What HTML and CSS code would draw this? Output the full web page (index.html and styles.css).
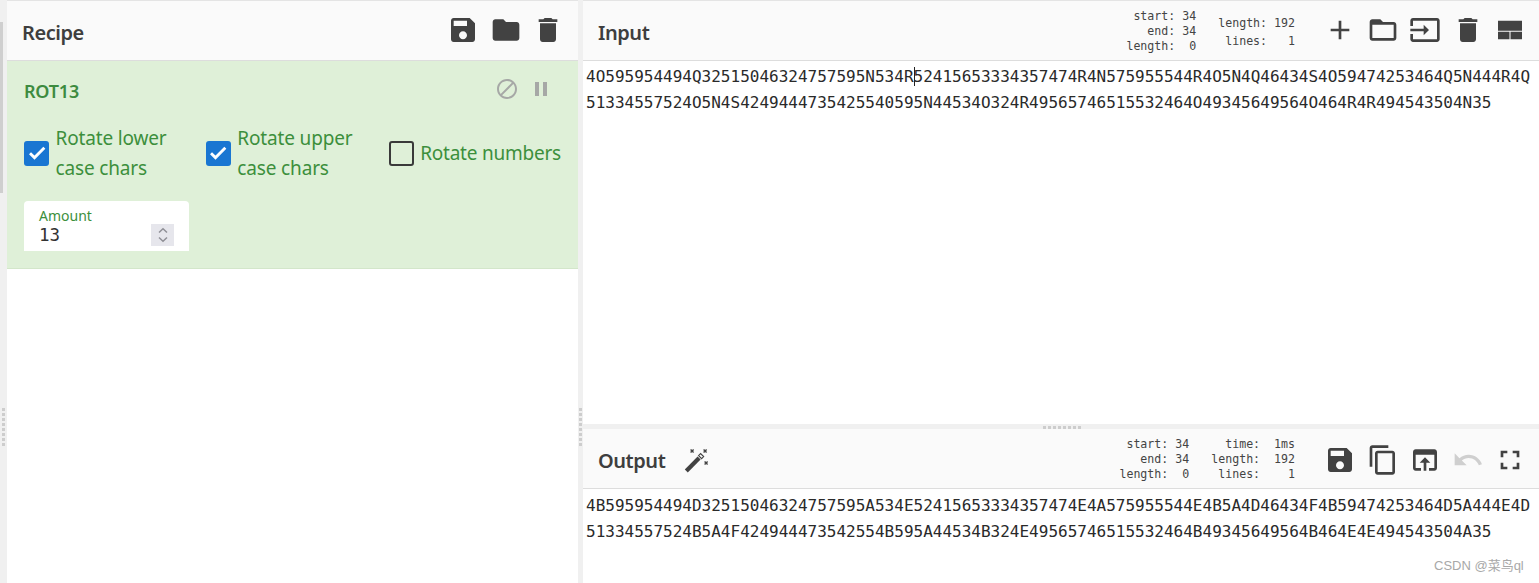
FILE: index.html
```html
<!DOCTYPE html>
<html lang="en">
<head>
<meta charset="utf-8">
<title>CyberChef ROT13</title>
<link rel="stylesheet" href="styles.css">
</head>
<body>
<div class="app">
  <div class="gutter gutter-left"><span class="scrollthumb"></span><span class="grip"></span></div>
  <section class="recipe">
    <header class="bar">
      <h2 class="title">Recipe</h2>
      <div class="spacer"></div>
      <div class="icons">
        <svg class="icon" viewBox="0 0 24 24"><path d="M17 3H5c-1.11 0-2 .9-2 2v14c0 1.1.89 2 2 2h14c1.1 0 2-.9 2-2V7l-4-4zm-5 16c-1.66 0-3-1.34-3-3s1.34-3 3-3 3 1.34 3 3-1.34 3-3 3zm3-10H5V5h10v4z"/></svg>
        <svg class="icon" viewBox="0 0 24 24"><path d="M10 4H4c-1.1 0-1.99.9-1.99 2L2 18c0 1.1.9 2 2 2h16c1.1 0 2-.9 2-2V8c0-1.1-.9-2-2-2h-8l-2-2z"/></svg>
        <svg class="icon" viewBox="0 0 24 24"><path d="M6 19c0 1.1.9 2 2 2h8c1.1 0 2-.9 2-2V7H6v12zM19 4h-3.5l-1-1h-5l-1 1H5v2h14V4z"/></svg>
      </div>
    </header>
    <div class="op">
      <div class="op-head">
        <h3 class="op-title">ROT13</h3>
        <div class="op-icons">
          <svg class="op-icon" viewBox="0 0 24 24"><path d="M12 2C6.48 2 2 6.48 2 12s4.48 10 10 10 10-4.48 10-10S17.52 2 12 2zM4 12c0-4.42 3.58-8 8-8 1.85 0 3.55.63 4.9 1.69L5.69 16.9C4.63 15.55 4 13.85 4 12zm8 8c-1.85 0-3.55-.63-4.9-1.69L18.31 7.1C19.37 8.45 20 10.15 20 12c0 4.42-3.58 8-8 8z"/></svg>
          <svg class="op-icon" viewBox="0 0 24 24"><path d="M6 19h4V5H6v14zm8-14v14h4V5h-4z"/></svg>
        </div>
      </div>
      <div class="checks">
        <label class="check check-a"><span class="box on"><svg viewBox="0 0 24 24"><path d="M9 16.17L4.83 12l-1.41 1.41L9 19 21 7l-1.41-1.41z"/></svg></span><span class="check-text">Rotate lower case chars</span></label>
        <label class="check check-b"><span class="box on"><svg viewBox="0 0 24 24"><path d="M9 16.17L4.83 12l-1.41 1.41L9 19 21 7l-1.41-1.41z"/></svg></span><span class="check-text">Rotate upper case chars</span></label>
        <label class="check check-c"><span class="box"></span><span class="check-text">Rotate numbers</span></label>
      </div>
      <div class="amount">
        <div class="amount-label">Amount</div>
        <div class="amount-row">
          <span class="amount-value">13</span>
          <span class="spinner">
            <svg viewBox="0 0 12 7"><path d="M2 5.5 6 1.8l4 3.7"/></svg>
            <svg viewBox="0 0 12 7"><path d="M2 1.5 6 5.2l4-3.7"/></svg>
          </span>
        </div>
      </div>
    </div>
  </section>
  <div class="gutter gutter-mid"><span class="grip"></span></div>
  <main class="io">
    <section class="input">
      <header class="bar">
        <h2 class="title">Input</h2>
        <div class="spacer"></div>
        <div class="stats">
          <pre class="stat stat-tight">start: 34
end: 34
length:  0</pre>
          <pre class="stat stat-loose">length: 192
lines:   1</pre>
        </div>
        <div class="icons">
          <svg class="icon" viewBox="0 0 24 24"><path d="M19 13h-6v6h-2v-6H5v-2h6V5h2v6h6v2z"/></svg>
          <svg class="icon" viewBox="0 0 24 24"><path d="M20 6h-8l-2-2H4c-1.1 0-1.99.9-1.99 2L2 18c0 1.1.9 2 2 2h16c1.1 0 2-.9 2-2V8c0-1.1-.9-2-2-2zm0 12H4V8h16v10z"/></svg>
          <svg class="icon" viewBox="0 0 24 24"><path d="M21 3.01H3c-1.1 0-2 .9-2 2V9h2V4.99h18v14.03H3V15H1v4.01c0 1.1.9 1.98 2 1.98h18c1.1 0 2-.88 2-1.98v-14c0-1.11-.9-2-2-2zM11 16l4-4-4-4v3H1v2h10v3z"/></svg>
          <svg class="icon" viewBox="0 0 24 24"><path d="M6 19c0 1.1.9 2 2 2h8c1.1 0 2-.9 2-2V7H6v12zM19 4h-3.5l-1-1h-5l-1 1H5v2h14V4z"/></svg>
          <svg class="icon" viewBox="0 0 24 24"><path d="M3 5h18v7.5H3zM3 13.25h8.6V19H3zM12.4 13.25H21V19h-8.6z"/></svg>
        </div>
      </header>
      <div class="text text-input">
        <div class="line">4O595954494Q32515046324757595N534R<span class="caret"></span>52415653334357474R4N575955544R4O5N4Q46434S4O59474253464Q5N444R4Q</div>
        <div class="line">51334557524O5N4S4249444735425540595N44534O324R49565746515532464O49345649564O464R4R494543504N35</div>
      </div>
    </section>
    <div class="gutter-h"><span class="grip-h"></span></div>
    <section class="output">
      <header class="bar">
        <h2 class="title">Output</h2>
        <svg class="wand" viewBox="0 0 25 25"><path d="M0.8 21.6 13.6 8.6l3 3L3.8 24.6z"/><path class="wand-tip" d="M14.6 7.6l2-2 3 3-2 2z"/><path class="wand-x" d="M6.6 1.6l3 3M9.6 1.6l-3 3M19.6 1.6l3 3M22.6 1.6l-3 3M20.6 13.6l3 3M23.6 13.6l-3 3"/></svg>
        <div class="spacer"></div>
        <div class="stats">
          <pre class="stat stat-tight">start: 34
end: 34
length:  0</pre>
          <pre class="stat stat-tight">time:  1ms
length:  192
lines:    1</pre>
        </div>
        <div class="icons">
          <svg class="icon" viewBox="0 0 24 24"><path d="M17 3H5c-1.11 0-2 .9-2 2v14c0 1.1.89 2 2 2h14c1.1 0 2-.9 2-2V7l-4-4zm-5 16c-1.66 0-3-1.34-3-3s1.34-3 3-3 3 1.34 3 3-1.34 3-3 3zm3-10H5V5h10v4z"/></svg>
          <svg class="icon" viewBox="0 0 24 24"><path d="M16 1H4c-1.1 0-2 .9-2 2v14h2V3h12V1zm3 4H8c-1.1 0-2 .9-2 2v14c0 1.1.9 2 2 2h11c1.1 0 2-.9 2-2V7c0-1.1-.9-2-2-2zm0 16H8V7h11v14z"/></svg>
          <svg class="icon" viewBox="0 0 24 24"><path d="M19 4H5c-1.11 0-2 .9-2 2v12c0 1.1.89 2 2 2h4v-2H5V8h14v10h-4v2h4c1.1 0 2-.9 2-2V6c0-1.1-.89-2-2-2zm-7 6l-4 4h3v6h2v-6h3l-4-4z"/></svg>
          <svg class="icon icon-off" viewBox="0 0 24 24"><path d="M12.5 8c-2.65 0-5.05.99-6.9 2.6L2 7v9h9l-3.62-3.62c1.39-1.16 3.16-1.88 5.12-1.88 3.54 0 6.55 2.31 7.6 5.5l2.37-.78C21.08 11.03 17.15 8 12.5 8z"/></svg>
          <svg class="icon" viewBox="0 0 24 24"><path d="M7 14H5v5h5v-2H7v-3zm-2-4h2V7h3V5H5v5zm12 7h-3v2h5v-5h-2v3zM14 5v2h3v3h2V5h-5z"/></svg>
        </div>
      </header>
      <div class="text text-output">
        <div class="line">4B595954494D32515046324757595A534E52415653334357474E4A575955544E4B5A4D46434F4B59474253464D5A444E4D</div>
        <div class="line">51334557524B5A4F424944473542554B595A44534B324E49565746515532464B49345649564B464E4E494543504A35</div>
      </div>
    </section>
  </main>
</div>
<div class="watermark">CSDN @菜鸟ql</div>
</body>
</html>
```
FILE: styles.css
```css
* { box-sizing: border-box; }
html, body { margin: 0; height: 100%; overflow: hidden; background: #fff; }
body { font-family: "Noto Sans", "Open Sans", sans-serif; color: #424242; }

.app { display: flex; height: 583px; width: 1539px; }

.gutter { position: relative; flex: none; background: #f0f0f0; }
.gutter-left { width: 7px; }
.gutter-mid { width: 5px; }
.scrollthumb { position: absolute; left: 0; top: 22px; width: 3px; height: 171px; background: #cfcfcf; }
.grip {
  position: absolute; left: 2px; top: 408px; width: 3px; height: 38px;
  background: repeating-linear-gradient(to bottom, #cdcdcd 0 3px, transparent 3px 5px);
}
.gutter-mid .grip { left: 1px; }

.recipe { width: 571px; flex: none; display: flex; flex-direction: column; }
.io { flex: 1; display: flex; flex-direction: column; min-width: 0; }
.input { height: 424px; flex: none; display: flex; flex-direction: column; }
.output { flex: 1; display: flex; flex-direction: column; min-height: 0; }

.bar {
  height: 61px; flex: none; display: flex; align-items: center;
  background: #fafafa; border-top: 1px solid #e4e4e4; border-bottom: 1px solid #dddddd;
  padding: 4px 13px 0 15px;
}
.output .bar { height: 60px; border-top: 0; }
.title { margin: 0; font-size: 20px; font-weight: 600; color: #3e3e3e; line-height: 1; letter-spacing: -0.45px; }
.spacer { flex: 1; }
.icons { display: flex; gap: 10.5px; margin-top: -6px; }
.output .icons { margin-top: -2px; }
.recipe .icons { margin-right: 1px; }
.icon { width: 32px; height: 32px; fill: #424242; display: block; }
.icon-off { fill: #cfcfcf; }

.wand { width: 25px; height: 25px; margin-left: 19px; fill: #424242; }
.wand-tip { fill: #fafafa; stroke: #424242; stroke-width: 1.2; }
.wand-x { fill: none; stroke: #424242; stroke-width: 1.4; }

.stats { display: flex; gap: 22px; margin-right: 29px; margin-top: -2px; }
.stat {
  margin: 0; font-family: "DejaVu Sans Mono", monospace; font-size: 11.6px; color: #444;
  text-align: right; white-space: pre;
}
.stat-tight { line-height: 15px; }
.stat-loose { line-height: 18px; margin-top: 5px; }

.op {
  height: 208px; background: #dff0d8; border-bottom: 1px solid #d3e6ca;
  padding: 0 17px; color: #3c8a3c; flex: none;
}
.op-head { display: flex; align-items: center; justify-content: space-between; height: 60px; }
.op-title { margin: 0; font-size: 18px; font-weight: 600; color: #3d8b40; line-height: 1; letter-spacing: -0.2px; }
.op-icons { display: flex; gap: 10px; margin-top: -5px; margin-right: 8px; }
.op-icon { width: 24px; height: 24px; fill: #a6a8a6; display: block; }

.checks { display: flex; align-items: center; height: 60px; margin-top: 2px; }
.check { display: flex; align-items: center; }
.check-a { width: 182.5px; }
.check-b { width: 183.5px; }
.check-text { font-size: 19px; line-height: 30px; color: #3c8f3c; letter-spacing: -0.15px; }
.check-a .check-text, .check-b .check-text { width: 122px; }
.check-c .check-text { white-space: nowrap; letter-spacing: -0.22px; }
.box {
  width: 25px; height: 25px; flex: none; margin-right: 6.5px; border: 2px solid #3a3a3a; border-radius: 3px;
}
.box.on { background: #1976d2; border: 0; display: flex; align-items: center; justify-content: center; }
.box svg { width: 20px; height: 20px; fill: #fff; stroke: #fff; stroke-width: 1.4; }

.amount { width: 165px; height: 50px; background: #fff; margin-top: 18px; border-radius: 4px 4px 0 0; padding: 7px 15px 0; }
.amount-label { font-size: 14px; line-height: 16px; color: #3c8f3c; }
.amount-row { display: flex; align-items: center; justify-content: space-between; height: 22px; }
.amount-value { font-family: "DejaVu Sans Mono", monospace; font-size: 17.5px; color: #333; }
.spinner {
  width: 23px; height: 22px; background: #e6e6ec; display: flex; flex-direction: column;
  align-items: center; justify-content: center; gap: 2px;
}
.spinner svg { width: 12px; height: 7px; fill: none; stroke: #8f8f96; stroke-width: 1.5; display: block; }

.text {
  flex: 1; background: #fff; padding: 3px 0 0 3px;
  font-family: "DejaVu Sans Mono", monospace; font-size: 16px; color: #2a2a2a;
}
.text-output { padding-top: 4px; }
.line { height: 26px; line-height: 26px; white-space: pre; }
.caret {
  display: inline-block; width: 1px; height: 19px; margin-right: -1px;
  background: #222; vertical-align: -4px;
}

.gutter-h { position: relative; height: 5px; flex: none; background: #f0f0f0; }
.grip-h {
  position: absolute; left: 460px; top: 2px; width: 38px; height: 3px;
  background: repeating-linear-gradient(to right, #cdcdcd 0 3px, transparent 3px 5px);
}

.watermark {
  position: absolute; left: 1434px; top: 557px; font-size: 13px; line-height: 18px;
  font-family: "Liberation Sans", "Noto Sans CJK SC", sans-serif; color: #a8a8a8;
}
```
